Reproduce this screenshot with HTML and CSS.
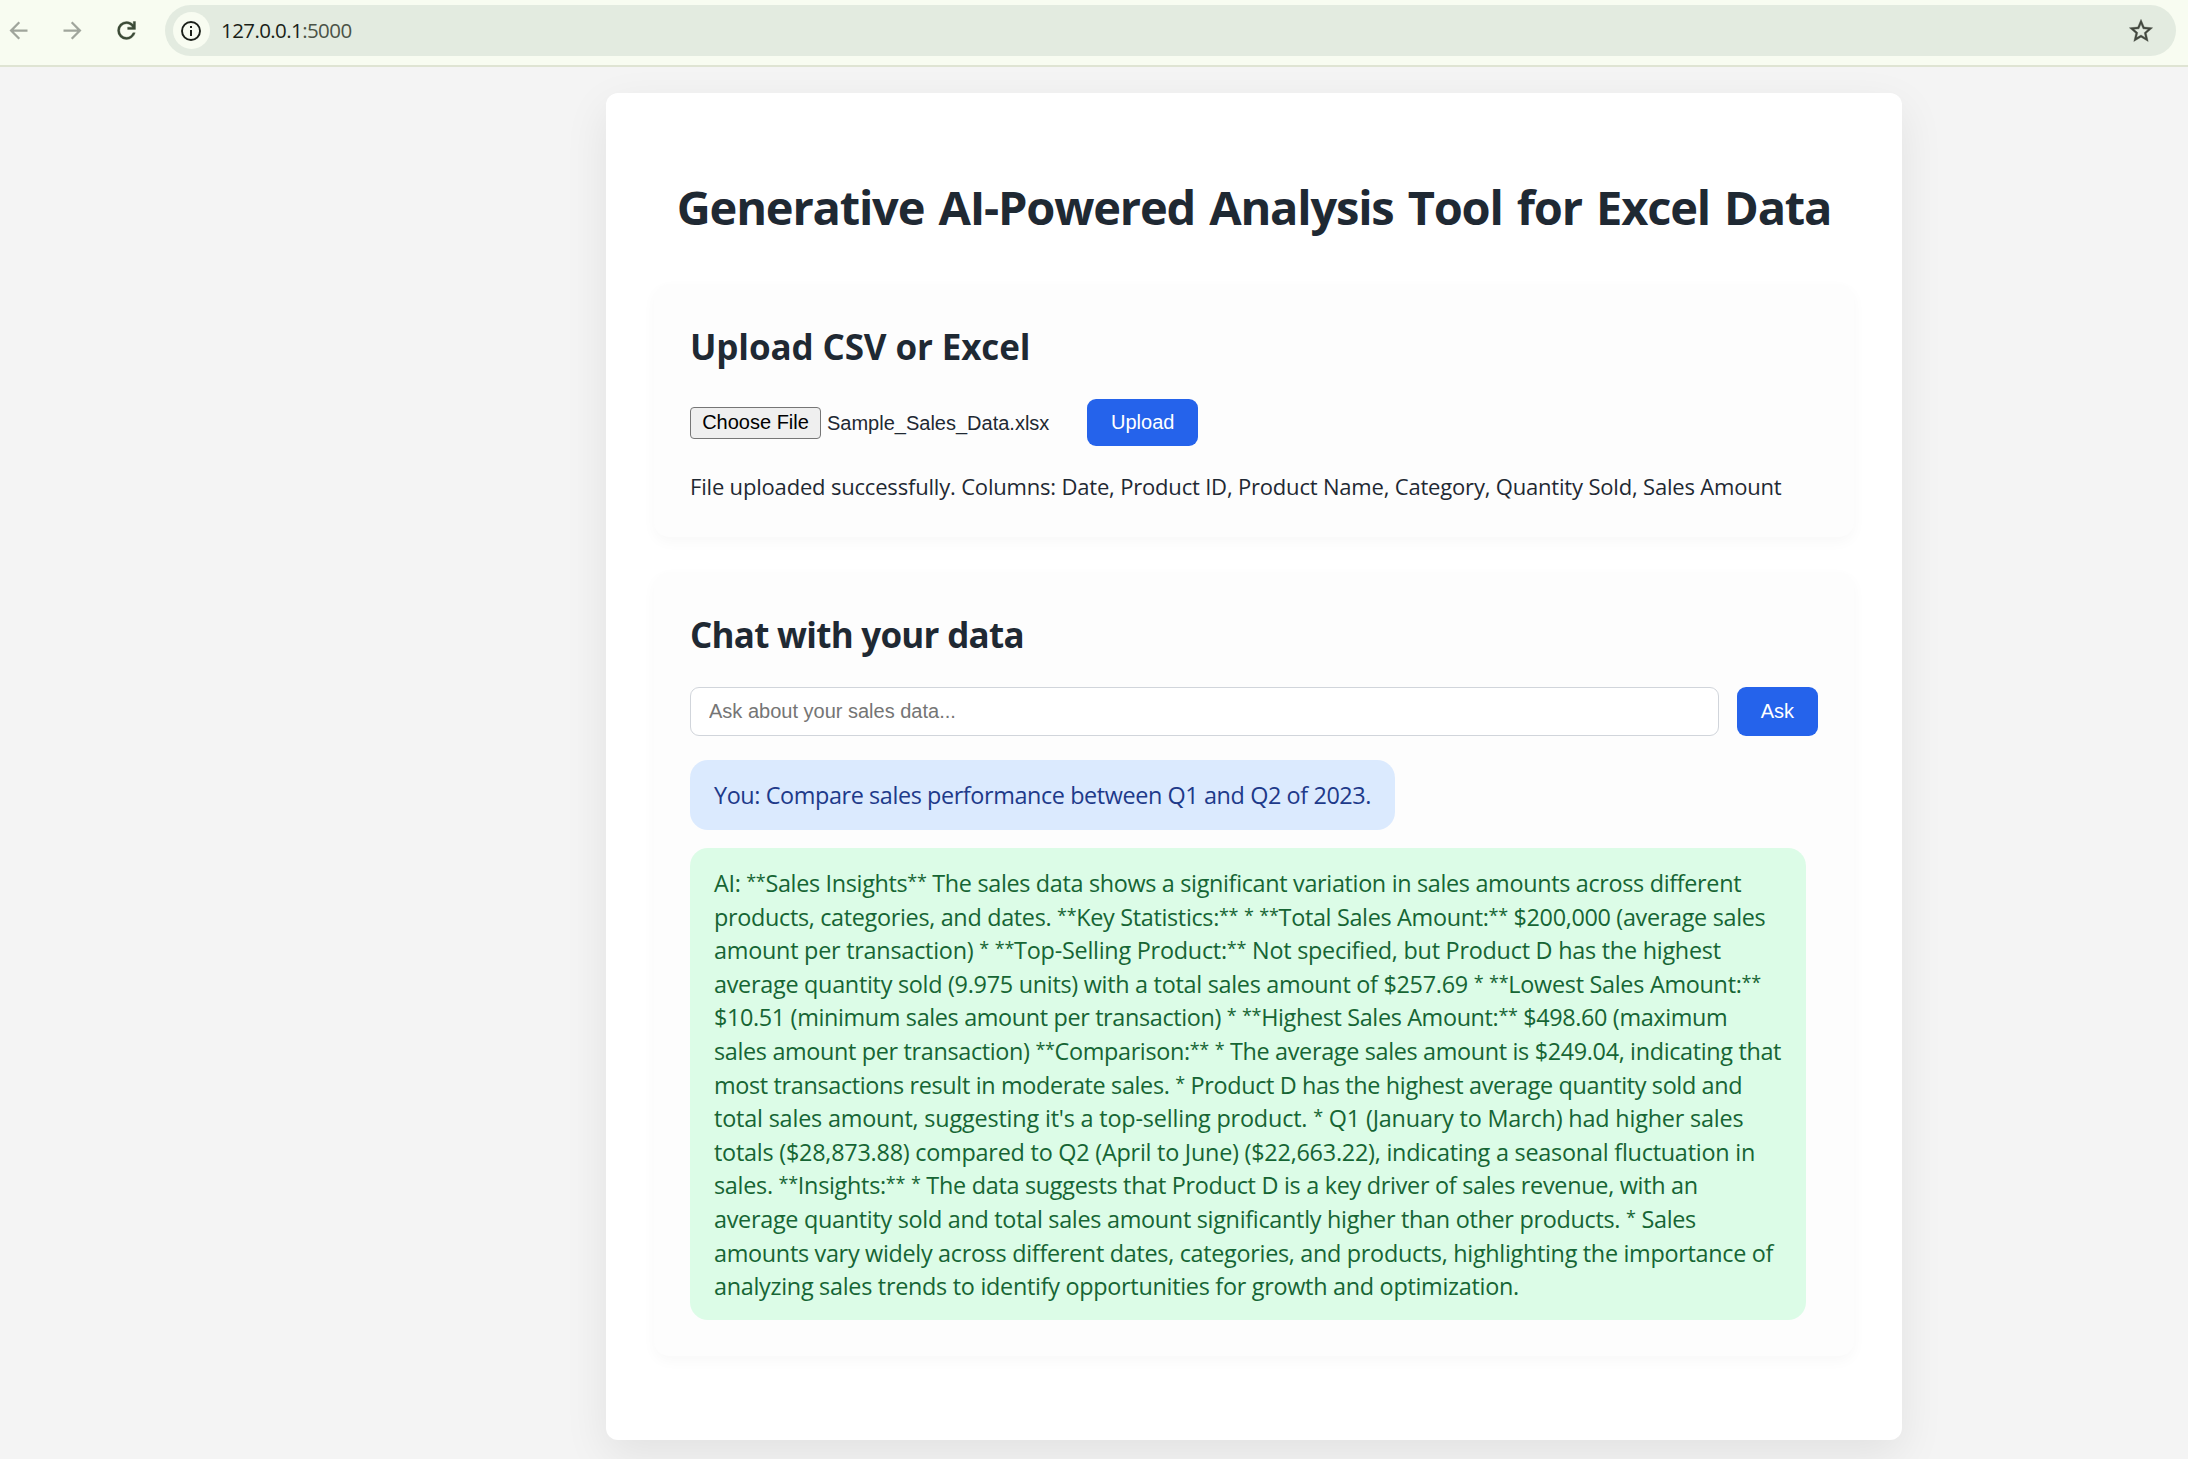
FILE: index.html
```html
<!DOCTYPE html>
<html lang="en">
<head>
<meta charset="utf-8">
<title>Generative AI-Powered Analysis Tool for Excel Data</title>
<link rel="stylesheet" href="styles.css">
</head>
<body>
<header class="toolbar">
  <nav class="nav-icons">
    <svg class="icon muted" viewBox="0 0 24 24"><path d="M20 11H7.83l5.59-5.59L12 4l-8 8 8 8 1.41-1.41L7.83 13H20v-2z"/></svg>
    <svg class="icon muted" viewBox="0 0 24 24"><path d="M12 4l-1.41 1.41L16.17 11H4v2h12.17l-5.58 5.59L12 20l8-8z"/></svg>
    <svg class="icon reload" viewBox="0 0 24 24"><path d="M12 20q-3.35 0-5.675-2.325T4 12q0-3.35 2.325-5.675T12 4q1.725 0 3.3.7125T18 6.75V4h2v7h-7V9h4.2q-.8-1.4-2.1875-2.2T12 6Q9.5 6 7.75 7.75T6 12q0 2.5 1.75 4.25T12 18q1.925 0 3.475-1.1T17.65 14h2.1q-.7 2.65-2.85 4.325T12 20z"/></svg>
  </nav>
  <div class="address">
    <span class="site-info">
      <svg class="info" viewBox="0 0 20 20"><circle cx="10" cy="10" r="9" fill="none" stroke="currentColor" stroke-width="1.9"/><path d="M9 9h2v6H9zM9 5h2v2H9z" fill="currentColor"/></svg>
    </span>
    <span class="url">127.0.0.1<span class="port">:5000</span></span>
    <svg class="star" viewBox="0 0 24 24"><path d="M22 9.24l-7.19-.62L12 2 9.19 8.63 2 9.24l5.46 4.73L5.82 21 12 17.27 18.18 21l-1.63-7.03L22 9.24zM12 15.4l-3.76 2.27 1-4.28-3.32-2.88 4.38-.38L12 6.1l1.71 4.04 4.38.38-3.32 2.88 1 4.28L12 15.4z"/></svg>
  </div>
</header>
<main class="container">
  <h1 class="title">Generative AI-Powered Analysis Tool for Excel Data</h1>
  <section class="card upload">
    <h2 class="heading heading-upload">Upload CSV or Excel</h2>
    <div class="upload-row">
      <div class="file-input">
        <button class="choose" type="button">Choose File</button>
        <span class="filename">Sample_Sales_Data.xlsx</span>
      </div>
      <button class="btn btn-upload" type="button">Upload</button>
    </div>
    <p class="status">File uploaded successfully. Columns: Date, Product ID, Product Name, Category, Quantity Sold, Sales Amount</p>
  </section>
  <section class="card chat">
    <h2 class="heading heading-chat">Chat with your data</h2>
    <div class="ask-row">
      <input class="question" type="text" placeholder="Ask about your sales data...">
      <button class="btn" type="button">Ask</button>
    </div>
    <div class="messages">
      <p class="bubble user">You: Compare sales performance between Q1 and Q2 of 2023.</p>
      <p class="bubble ai">
        <span class="line l1">AI: <i>**</i>Sales Insights<i>**</i> The sales data shows a significant variation in sales amounts across different</span>
        <span class="line l2">products, categories, and dates. <i>**</i>Key Statistics:<i>**</i> <i>*</i> <i>**</i>Total Sales Amount:<i>**</i> $200,000 (average sales</span>
        <span class="line l3">amount per transaction) <i>*</i> <i>**</i>Top-Selling Product:<i>**</i> Not specified, but Product D has the highest</span>
        <span class="line l4">average quantity sold (9.975 units) with a total sales amount of $257.69 <i>*</i> <i>**</i>Lowest Sales Amount:<i>**</i></span>
        <span class="line l5">$10.51 (minimum sales amount per transaction) <i>*</i> <i>**</i>Highest Sales Amount:<i>**</i> $498.60 (maximum</span>
        <span class="line l6">sales amount per transaction) <i>**</i>Comparison:<i>**</i> <i>*</i> The average sales amount is $249.04, indicating that</span>
        <span class="line l7">most transactions result in moderate sales. <i>*</i> Product D has the highest average quantity sold and</span>
        <span class="line l8">total sales amount, suggesting it's a top-selling product. <i>*</i> Q1 (January to March) had higher sales</span>
        <span class="line l9">totals ($28,873.88) compared to Q2 (April to June) ($22,663.22), indicating a seasonal fluctuation in</span>
        <span class="line l10">sales. <i>**</i>Insights:<i>**</i> <i>*</i> The data suggests that Product D is a key driver of sales revenue, with an</span>
        <span class="line l11">average quantity sold and total sales amount significantly higher than other products. <i>*</i> Sales</span>
        <span class="line l12">amounts vary widely across different dates, categories, and products, highlighting the importance of</span>
        <span class="line l13">analyzing sales trends to identify opportunities for growth and optimization.</span>
      </p>
    </div>
  </section>
</main>
</body>
</html>
```
FILE: styles.css
```css
* { box-sizing: border-box; }
html { background: #f4f4f4; }
body {
  margin: 0;
  height: 1459px;
  overflow: hidden;
  background: #f4f4f4;
  color: #1f2933;
  font-family: "Open Sans", "Noto Sans", sans-serif;
}
h1, h2, p { margin: 0; }

/* Browser toolbar */
.toolbar {
  display: flex;
  align-items: center;
  height: 67px;
  padding: 0 12px 4px 4.5px;
  background: #f8fcf1;
  border-bottom: 2px solid #dfe4d3;
}
.nav-icons { display: flex; gap: 27px; width: 160.5px; flex: none; }
.icon { width: 27px; height: 27px; flex: none; fill: currentColor; }
.muted { color: #a0a59c; }
.reload { color: #3b4a36; stroke: currentColor; stroke-width: .3; }
.address {
  display: flex;
  flex: 1;
  align-items: center;
  height: 51px;
  padding: 0 21px 0 7.5px;
  border-radius: 26px;
  background: #e3ebe0;
}
.site-info {
  display: flex;
  align-items: center;
  justify-content: center;
  width: 37px;
  height: 37px;
  border-radius: 50%;
  background: #f8fcf1;
  color: #1a1f18;
}
.info { width: 20px; height: 20px; }
.url {
  flex: 1;
  padding: 0 0 1px 11.5px;
  color: #1a1f18;
  font-size: 20.5px;
  line-height: 28px;
  letter-spacing: -.59px;
}
.port { color: #4b5347; }
.star { width: 28px; height: 28px; fill: #43483f; stroke: #43483f; stroke-width: .3; }

/* Page container */
.container {
  width: 1296px;
  height: 1347px;
  margin: 26px 0 0 606px;
  padding: 82px 48px 84px;
  border-radius: 12px;
  background: #fff;
  box-shadow: 0 15px 45px rgba(0, 0, 0, .08);
}
.title {
  margin-bottom: 45px;
  font-size: 47px;
  font-weight: 700;
  line-height: 64px;
  letter-spacing: -1.2px;
  word-spacing: 3.2px;
  text-align: center;
  white-space: nowrap;
}
.card {
  padding: 39px 36px 34px;
  border-radius: 15px;
  background: #fdfdfd;
  box-shadow: 0 5px 14px rgba(0, 0, 0, .03);
}
.upload { height: 253px; }
.chat { margin-top: 35px; padding-bottom: 36px; }
.heading { margin-bottom: 28px; font-size: 35px; font-weight: 700; line-height: 48px; letter-spacing: -.12px; }
.heading-chat { letter-spacing: -.74px; }

/* Upload */
.upload-row { display: flex; align-items: center; height: 47px; }
.file-input { display: flex; align-items: center; width: 397px; gap: 6px; padding-top: 1px; }
.choose {
  width: 131px;
  height: 32px;
  padding: 0 0 2px;
  border: 1px solid #767676;
  border-radius: 4px;
  background: #efefef;
  color: #000;
  font: 20px "Liberation Sans", Arial, sans-serif;
}
.filename { font: 20px/24px "Liberation Sans", Arial, sans-serif; }
.btn {
  padding: 0 24px;
  height: 49px;
  border: 0;
  border-radius: 9px;
  background: #2563eb;
  color: #fff;
  font: 20px "Liberation Sans", Arial, sans-serif;
}
.btn-upload { height: 47px; padding-bottom: 1px; }
.status {
  margin-top: 24px;
  font-size: 22px;
  line-height: 33px;
  letter-spacing: -.186px;
  white-space: nowrap;
}

/* Chat */
.ask-row { display: flex; gap: 18px; height: 49px; }
.question {
  flex: 1;
  min-width: 0;
  padding: 0 18px;
  border: 1px solid #d1d5db;
  border-radius: 9px;
  background: #fff;
  font: 20px "Liberation Sans", Arial, sans-serif;
}
.question::placeholder { color: #757575; }
.messages {
  display: flex;
  flex-direction: column;
  align-items: flex-start;
  gap: 18px;
  margin-top: 24px;
}
.bubble {
  padding: 19px 24px 17px;
  border-radius: 18px;
  font-size: 23.4px;
  line-height: 33.6px;
  white-space: nowrap;
}
.user { width: 705px; height: 70px; background: #dbeafe; color: #1e3a8a; letter-spacing: -.4px; }
.ai { width: 1116px; height: 472px; background: #dcfce7; color: #166534; }
.line { display: block; }
.line i { font-size: 18px; font-style: normal; line-height: 0; vertical-align: 4px; }
.l1 { letter-spacing: -.329px; }
.l2 { letter-spacing: -.32px; }
.l3 { letter-spacing: -.245px; }
.l4 { letter-spacing: -.281px; }
.l5 { letter-spacing: -.355px; }
.l6 { letter-spacing: -.338px; }
.l7 { letter-spacing: -.345px; }
.l8 { letter-spacing: -.182px; }
.l9 { letter-spacing: -.232px; }
.l10 { letter-spacing: -.286px; }
.l11 { letter-spacing: -.292px; }
.l12 { letter-spacing: -.303px; }
.l13 { letter-spacing: -.283px; }
```
